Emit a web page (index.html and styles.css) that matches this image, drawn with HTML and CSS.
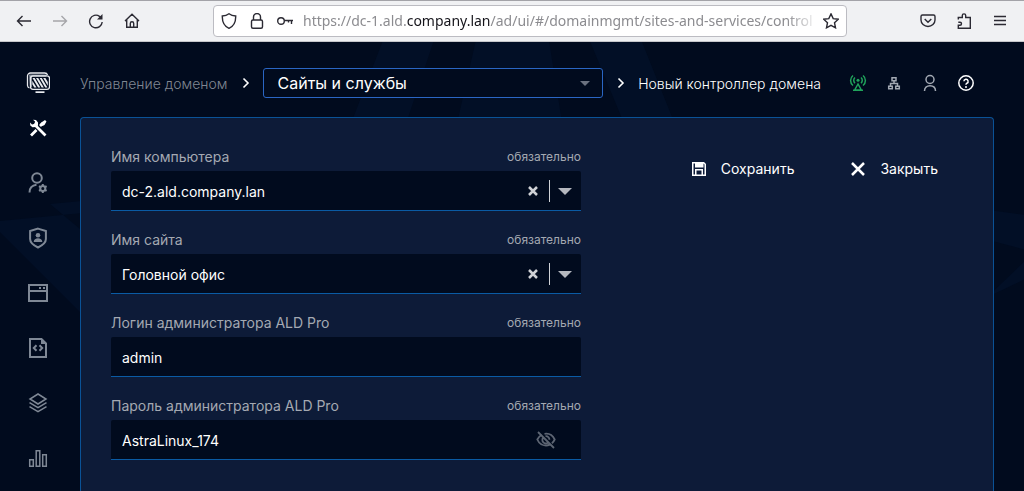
FILE: index.html
```html
<!DOCTYPE html>
<html lang="ru">
<head>
<meta charset="utf-8">
<meta name="viewport" content="width=device-width, initial-scale=1">
<title>Новый контроллер домена</title>
<link rel="stylesheet" href="styles.css">
</head>
<body>
<header class="browser">
  <div class="browser-nav">
    <button class="tool" aria-label="Назад"><svg viewBox="0 0 16 16"><path d="M15 8H1.5M6.5 3L1.5 8l5 5"/></svg></button>
    <button class="tool tool-off" aria-label="Вперёд" disabled><svg viewBox="0 0 16 16"><path d="M1 8h13.500M9.500 3l5 5-5 5"/></svg></button>
    <button class="tool" aria-label="Обновить"><svg viewBox="0 0 16 16"><path d="M14.200 9A6.300 6.300 0 1 1 11.500 3.300l1.500 1"/><path class="solid" d="M14.500 1v5.500H9z"/></svg></button>
    <button class="tool" aria-label="Домой"><svg viewBox="0 0 16 16"><path d="M1 8l7-6.800L15 8M2.700 6.800v7.500h10.600V6.800M6.300 14.200V10.500a1.700 1.700 0 0 1 3.400 0v3.700"/></svg></button>
  </div>
  <div class="address">
    <svg viewBox="0 0 16 16"><path d="M8 .8C10 2.300 12 2.900 14.700 3c.2 6-1.800 10.200-6.700 12.300C3.100 13.200 1.100 9 1.300 3 4 2.900 6 2.300 8 .8z"/></svg>
    <svg viewBox="0 0 16 16"><rect x="2.500" y="7" width="11" height="8.200" rx="1.500"/><path d="M4.500 7V4a3.500 3.500 0 0 1 7 0v3"/></svg>
    <svg viewBox="0 0 16 16"><circle cx="4" cy="8" r="3.300"/><path d="M7.300 7.500H16M14.500 7.500V11M11.500 7.500v2"/></svg>
    <div class="url" role="textbox" aria-label="Адрес" contenteditable="true" spellcheck="false">https://dc-1.ald.<span class="host">company.lan</span>/ad/ui/#/domainmgmt/sites-and-services/control</div>
    <button class="tool" aria-label="В закладки"><svg viewBox="0 0 16 16"><path d="M8 .9l2.200 4.700 5.100.6-3.800 3.500 1 5.100L8 12.300l-4.500 2.500 1-5.100L.7 6.200l5.100-.6z"/></svg></button>
  </div>
  <div class="browser-menu">
    <button class="tool" aria-label="Pocket"><svg viewBox="0 0 16 16"><path d="M2.500 2h11a1.500 1.500 0 0 1 1.500 1.500V7A7 6.500 0 0 1 1 7V3.500A1.500 1.500 0 0 1 2.500 2zM4.700 6L8 9.200 11.300 6"/></svg></button>
    <button class="tool" aria-label="Расширения"><svg viewBox="0 0 16 16"><path d="M2.300 6.500V4.500h4V2.600a1.700 1.700 0 0 1 3.400 0v1.900h4.600v10.700H2.300v-3H4a1.500 1.500 0 0 0 0-3H2.300"/></svg></button>
    <button class="tool" aria-label="Меню"><svg viewBox="0 0 16 16"><path d="M2 3.500h12M2 7.500h12M2 11.500h12"/></svg></button>
  </div>
</header>

<div class="app">
  <svg class="backdrop" viewBox="0 0 1024 449" preserveAspectRatio="xMidYMin slice" aria-hidden="true">
    <path d="M390-20L342 105L350 145L-10 180L140 330L110 449H184L240 320L50 162L390 130L440-20z"/>
    <path d="M480-20L446 130L512 105L570 130L546-20z"/>
    <path d="M582-20L640 120L1040 175L1040 230L830 330L880 449H950L910 330L1034 210L690 120L634-20z"/>
  </svg>

  <aside class="sidebar">
    <a class="logo" href="#" aria-label="ALD Pro">
      <svg viewBox="0 0 24 24">
        <path class="line" d="M3.500 17a2.800 2.800 0 0 1-2-2.500V5a3 3 0 0 1 3-3h14a3 3 0 0 1 3 2"/>
        <path class="wash" d="M3 3.500h17.500V6H6v10H4z"/>
        <rect class="line" x="4.500" y="4.800" width="19" height="13.500" rx="2.500"/>
        <path class="fill" d="M6.500 7h2.200l5.600 9.500h-2.200zM10 7h2.200l5.600 9.500h-2.200zM13.600 7h2.200l5.600 9.500h-2.200zM17.200 7h2.200l2.400 4v3.700zM6.300 9.700l4.200 6.800H8.300l-2-3.300z"/>
        <path class="fill" d="M9.500 20.300h9V22h-9z"/>
      </svg>
    </a>
    <nav class="menu" aria-label="Разделы">
      <a class="menu-item current" href="#" aria-label="Управление доменом" aria-current="page"><svg viewBox="0 0 24 24"><path class="thick" d="M5 19.500l5.500-5.500M14 10l3-3M8 8l11.500 11.500"/><path class="fill" d="M16 6l3-2 1.500 1.500L18.500 9l-2 1-2.300-2.300zM4 6.500L6 8.600 8.500 8 9 5.600 7 3.700 10 4l2 2.500v3L10 11l-3.500.3L4.300 9.500z"/></svg></a>
      <a class="menu-item" href="#" aria-label="Пользователи"><svg viewBox="0 0 24 24"><circle cx="11" cy="7" r="4.800"/><path d="M3.500 21.500c0-4.500 2.600-7.300 7-7.800"/><circle cx="16.800" cy="17.500" r="2.500"/><path d="M16.800 13v2M16.800 20v2M13 15.200l1.600 1M19 18.800l1.600 1M13 19.800l1.600-1M19 16.200l1.600-1"/></svg></a>
      <a class="menu-item" href="#" aria-label="Политики"><svg viewBox="0 0 24 24"><path d="M12 2.600l7.900 2.400v8c0 4-4 6.600-7.900 8.500-3.900-1.900-7.900-4.500-7.900-8.500V5z"/><circle class="fill" cx="12" cy="9.300" r="2.300"/><path class="fill" d="M7.700 16c0-5 8.600-5 8.600 0z"/></svg></a>
      <a class="menu-item" href="#" aria-label="Приложения"><svg viewBox="0 0 24 24"><path d="M3 4h18v16H3zM3 10h18"/><path class="fill" d="M13 6h2v2h-2zM17 6h2v2h-2z"/></svg></a>
      <a class="menu-item" href="#" aria-label="Сценарии"><svg viewBox="0 0 24 24"><path d="M4 3h11.500L20 7.500V21H4z"/><path class="fill" d="M15 3l5 5h-5z"/><path d="M10.500 9.300L7.800 12l2.700 2.700M13.500 9.300l2.700 2.700-2.700 2.700"/></svg></a>
      <a class="menu-item" href="#" aria-label="Слои"><svg viewBox="0 0 24 24"><path class="thin" d="M12 3l8 5-8 5-8-5zM3.500 11.700l8.500 5 8.500-5M3.500 15.700l8.500 5 8.500-5"/></svg></a>
      <a class="menu-item" href="#" aria-label="Отчёты"><svg viewBox="0 0 24 24"><path class="thin" d="M3.700 13.700h3.600v6.600H3.700zM10.200 4.700h3.600v15.600h-3.600zM16.700 8.700h3.600v11.600h-3.600z"/></svg></a>
    </nav>
  </aside>

  <main class="content">
    <div class="topbar">
      <nav class="crumbs" aria-label="Навигация">
        <a class="crumb" href="#">Управление доменом</a>
        <svg class="chevron" viewBox="0 0 8 12"><path d="M1.500 1.500L6 6l-4.500 4.500"/></svg>
        <div class="section">
          <select aria-label="Подраздел"><option>Сайты и службы</option></select>
          <svg class="section-arrow" viewBox="0 0 10 6"><path d="M0 0h10L5 5z"/></svg>
        </div>
        <svg class="chevron" viewBox="0 0 8 12"><path d="M1.500 1.500L6 6l-4.500 4.500"/></svg>
        <span class="here" aria-current="page">Новый контроллер домена</span>
      </nav>
      <div class="status">
        <button class="status-item online" aria-label="Состояние"><svg viewBox="0 0 18 18"><path d="M4 1.500C.8 4 .8 9 4 11.500M6 3.500c-1.700 1.500-1.700 4.200 0 5.700M14 1.500c3.200 2.500 3.200 7.500 0 10M12 3.500c1.700 1.500 1.700 4.200 0 5.700M9 10l-3.300 6h6.600zM4 16.300h10"/><circle class="fill" cx="9" cy="6.300" r="1.500"/></svg></button>
        <button class="status-item" aria-label="Топология"><svg viewBox="0 0 18 18"><path d="M7 3.700h4v3H7zM3.700 12.200h3.600v2.600H3.700zM10.700 12.200h3.600v2.600h-3.600zM9 6.700v2.800M5.500 12V9.500h7V12"/></svg></button>
        <button class="status-item" aria-label="Профиль"><svg viewBox="0 0 18 18"><circle cx="9" cy="5.500" r="4"/><path d="M3.500 17c0-3.500 2.300-5.300 5.500-5.300s5.500 1.800 5.500 5.300"/></svg></button>
        <button class="status-item help" aria-label="Справка"><svg viewBox="0 0 18 18"><circle cx="9" cy="9" r="7.200"/><path d="M6.900 7.300a2.100 2.100 0 1 1 3 1.900c-.7.400-.9.700-.9 1.500"/><circle class="fill" cx="9" cy="13" r="1"/></svg></button>
      </div>
    </div>

    <form class="panel">
      <div class="fields">
        <div class="field">
          <div class="caption"><label for="host">Имя компьютера</label><span class="required">обязательно</span></div>
          <div class="box">
            <select id="host"><option>dc-2.ald.company.lan</option></select>
            <button type="button" class="clear" aria-label="Очистить"><svg viewBox="0 0 10 10"><path d="M1 1l8 8M9 1L1 9"/></svg></button>
            <button type="button" class="open" aria-label="Открыть список"><svg viewBox="0 0 14 7"><path d="M0 0h14L7 7z"/></svg></button>
          </div>
        </div>
        <div class="field">
          <div class="caption"><label for="site">Имя сайта</label><span class="required">обязательно</span></div>
          <div class="box">
            <select id="site"><option>Головной офис</option></select>
            <button type="button" class="clear" aria-label="Очистить"><svg viewBox="0 0 10 10"><path d="M1 1l8 8M9 1L1 9"/></svg></button>
            <button type="button" class="open" aria-label="Открыть список"><svg viewBox="0 0 14 7"><path d="M0 0h14L7 7z"/></svg></button>
          </div>
        </div>
        <div class="field">
          <div class="caption"><label for="login">Логин администратора ALD Pro</label><span class="required">обязательно</span></div>
          <div class="box"><input id="login" type="text" value="admin" spellcheck="false"></div>
        </div>
        <div class="field">
          <div class="caption"><label for="password">Пароль администратора ALD Pro</label><span class="required">обязательно</span></div>
          <div class="box">
            <input id="password" type="text" value="AstraLinux_174" spellcheck="false" autocomplete="off">
            <button type="button" class="reveal" aria-label="Скрыть пароль"><svg viewBox="0 0 20 20"><path d="M2 2l16 16M6 4.700C3.700 5.800 2.200 7.700 1.300 9.500c1.700 3.800 5 6 8.700 6 1.300 0 2.600-.3 3.800-.8M8.500 3.800c4.200-.7 8.200 1.600 10.200 5.700-.7 1.500-1.600 2.800-2.800 3.800M7.300 7.500a3.400 3.400 0 0 0 4.900 4.800M9.500 6.200a3.400 3.400 0 0 1 3.900 3.600"/></svg></button>
          </div>
        </div>
      </div>
      <div class="actions">
        <button type="submit" class="action"><svg viewBox="0 0 16 16"><path class="fill" fill-rule="evenodd" d="M1 1h12l2 2v12H1zM2.500 2.500v11H4V8h8v5.500h1.500V3.500L12.500 2.500v4H4v-4zM5.500 9.500v4h5v-4z"/></svg><span>Сохранить</span></button>
        <button type="button" class="action"><svg viewBox="0 0 16 16"><path d="M2 2l12 12M14 2L2 14"/></svg><span>Закрыть</span></button>
      </div>
    </form>
  </main>
</div>
</body>
</html>
```
FILE: styles.css
```css
* { box-sizing: border-box; }

body {
  margin: 0;
  min-height: 100vh;
  display: flex;
  flex-direction: column;
  background: #010b1e;
  color: #fff;
  font: 14px/20px Inter, "Liberation Sans", sans-serif;
}

button, input, select {
  margin: 0;
  padding: 0;
  border: 0;
  background: none;
  color: inherit;
  font: inherit;
}

a { color: inherit; text-decoration: none; }

svg {
  display: block;
  flex: none;
  fill: none;
  stroke: currentColor;
}

.fill, .solid { fill: currentColor; stroke: none; }

/* Browser toolbar */
.browser {
  display: flex;
  align-items: center;
  height: 42px;
  padding: 0 16px;
  border-top: 1px solid #a3a3a8;
  border-bottom: 1px solid #c6c6ca;
  background: #f0f1f3;
  color: #2b2a33;
}

.browser svg { width: 16px; height: 16px; stroke-width: 1.4; }
.browser-nav, .browser-menu { display: flex; gap: 20px; }
.tool { flex: none; width: 16px; height: 16px; }
.tool-off { color: #a5a5a9; }

.address {
  flex: 1;
  min-width: 0;
  display: flex;
  align-items: center;
  gap: 12px;
  height: 32px;
  margin: 0 73px;
  padding: 0 7px;
  border: 1px solid #bcbcc2;
  border-radius: 4px;
  background: #fff;
}

.url {
  flex: 1;
  min-width: 0;
  margin: 0 -8px 0 -2px;
  overflow: hidden;
  white-space: nowrap;
  font: 14px/20px "Noto Sans", sans-serif;
  color: #8c8c90;
  outline: 0;
  -webkit-mask-image: linear-gradient(to left, transparent, #000 32px);
  mask-image: linear-gradient(to left, transparent, #000 32px);
}

.host { color: #15141a; }

/* Application shell */
.app {
  position: relative;
  flex: 1;
  display: flex;
  overflow: hidden;
}

.backdrop {
  position: absolute;
  inset: 0;
  width: 100%;
  height: 100%;
  fill: #020f26;
  stroke: none;
}

.sidebar, .content { position: relative; }
.sidebar { flex: none; width: 80px; padding: 29px 26px 0; }
.sidebar svg { width: 24px; height: 24px; }
.logo { display: block; color: #e8eaee; }
.logo .line { stroke-width: 1.3; }
.wash { fill: #7d8694; stroke: none; }

.menu {
  display: flex;
  flex-direction: column;
  gap: 31px;
  margin-top: 21px;
}

.menu-item { color: #7f8895; stroke-width: 2; }
.menu-item.current { color: #fff; }
.thin { stroke-width: 1.5; }
.thick { stroke-width: 2.8; }

.content {
  flex: 1;
  min-width: 0;
  display: flex;
  flex-direction: column;
  padding: 26px 30px 0 0;
}

.topbar {
  display: flex;
  align-items: center;
  gap: 25px;
  padding-right: 16px;
}

.crumbs { flex: 1; min-width: 0; display: flex; align-items: center; }
.crumb, .here { padding-top: 2px; font-weight: 300; }
.crumb { color: #808792; }
.chevron { width: 8px; height: 12px; margin: 0 13px 0 14px; stroke-width: 1.6; }

.section { position: relative; flex: 1; min-width: 0; }

.section select {
  display: block;
  width: 100%;
  height: 30px;
  padding: 0 14px;
  border: 1px solid #2a66c4;
  border-radius: 3px;
  background: #010b1e;
  appearance: none;
  font-size: 16px;
}

.section-arrow {
  position: absolute;
  right: 13px;
  top: 13px;
  width: 10px;
  height: 6px;
  fill: #6b7280;
  stroke: none;
  pointer-events: none;
}

.status { display: flex; gap: 12px; }
.status-item { width: 24px; height: 24px; padding: 3px; color: #a3a9b3; }
.status-item svg { width: 18px; height: 18px; stroke-width: 1.5; }
.status-item.online { color: #20a45c; }
.status-item.help { color: #fff; }

/* Controller form */
.panel {
  flex: 1;
  display: flex;
  justify-content: space-between;
  margin-top: 19px;
  padding: 29px 55px 30px 30px;
  border: 1px solid #0a5296;
  border-bottom: 0;
  border-radius: 4px 4px 0 0;
  background: rgba(14, 28, 57, 0.96);
}

.fields {
  flex: 0 1 470px;
  display: flex;
  flex-direction: column;
  gap: 19px;
}

.caption {
  display: flex;
  justify-content: space-between;
  margin-bottom: 4px;
  color: #a4a9b2;
}

.required { font-size: 12px; }

.box {
  display: flex;
  align-items: center;
  height: 40px;
  padding: 0 9px 0 11px;
  border-bottom: 1px solid #0a5ba4;
  border-radius: 2px 2px 0 0;
  background: #010b1e;
}

.box input, .box select {
  flex: 1;
  min-width: 0;
  height: 39px;
  padding-top: 2px;
  appearance: none;
  outline: 0;
}

.clear { padding: 6px 11px; color: #d0d2d6; }
.clear svg { width: 10px; height: 10px; stroke-width: 2.5; }
.open { padding: 8px 0 7px 8px; border-left: 1px solid #d0d2d6; color: #b5b8bf; }
.open svg { width: 14px; height: 7px; fill: currentColor; stroke: none; }
.reveal { margin-right: 16px; color: #5d6573; }
.reveal svg { width: 20px; height: 20px; stroke-width: 1.8; }

.actions {
  display: flex;
  align-items: flex-start;
  gap: 56px;
  padding-top: 12px;
}

.action { display: flex; align-items: center; gap: 14px; }
.action svg { width: 16px; height: 16px; stroke-width: 2.5; }
```
